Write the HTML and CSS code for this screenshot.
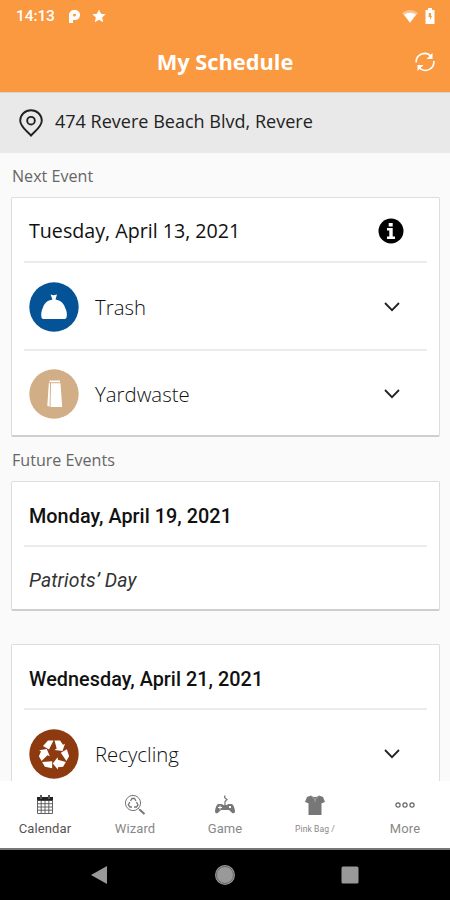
FILE: index.html
```html
<!DOCTYPE html>
<html lang="en">
<head>
<meta charset="utf-8">
<title>My Schedule</title>
<link rel="stylesheet" href="styles.css">
</head>
<body>
<div class="app">
  <header class="top">
    <div class="status">
      <span class="clock">14:13</span>
      <svg class="parking" width="13" height="15" viewBox="0 0 13 15"><path fill="#fff" fill-rule="evenodd" d="M1 6.500C1 3 3.200 1 6.500 1S12 3 12 6s-2.200 5-5.500 5H5v3H1zM6.500 4.500a1.500 1.500 0 1 0 0 3 1.500 1.500 0 1 0 0-3z"/></svg>
      <svg class="star" width="14" height="14" viewBox="0 0 24 24"><path fill="#fff" d="M12 1l3.400 7.300 8 .9-6 5.400 1.700 8L12 18.500l-7.100 4.100 1.700-8-6-5.400 8-.9z"/></svg>
      <svg class="wifi" width="16" height="13" viewBox="0 0 16 13"><path fill="#fff" opacity=".4" d="M0 3Q8-3 16 3L8 13z"/><path fill="#fff" d="M2 4.500Q8 1 14 4.500L8 12.500z"/></svg>
      <svg class="battery" width="10" height="16" viewBox="0 0 10 16"><path fill="#fff" d="M3 0h4v2h2.500v14h-9V2H3z"/><path fill="#fa993f" d="M4 5h2v3h1l-2 4V9H3.500z"/></svg>
    </div>
    <div class="titlebar">
      <h1>My Schedule</h1>
      <svg class="refresh" width="20" height="20" viewBox="0 0 20 20" fill="none" stroke="#fff" stroke-width="1.600"><path d="M1.200 10.500A8.500 8.500 0 0 1 16.200 4.500M18.800 9A8.500 8.500 0 0 1 4 15.500"/><path fill="#fff" stroke="none" d="M17.500 1v6h-6zM2.500 19v-6h6z"/></svg>
    </div>
  </header>
  <div class="address">
    <svg width="24" height="28" viewBox="0 0 24 28" fill="none" stroke="#222" stroke-width="1.900"><path d="M12 26.500C8 22 1.200 18 1.200 11.500a10.800 10.300 0 0 1 21.600 0C22.800 18 16 22 12 26.500z"/><circle cx="12" cy="11.700" r="3.800"/></svg>
    <span>474 Revere Beach Blvd, Revere</span>
  </div>
  <main class="content">
    <h2>Next Event</h2>
    <section class="card next">
      <div class="date">Tuesday, April 13, 2021
        <svg class="info" width="26" height="26" viewBox="0 0 26 26"><circle cx="13" cy="13" r="12.500" fill="#000"/><path fill="#fff" d="M10.700 5h4v3.500h-4zM9 10h5.700v8.500H17V21H9v-2.500h2.300v-6H9z"/></svg>
      </div>
      <div class="event">
        <svg class="badge" width="50" height="50" viewBox="0 0 50 50"><circle cx="25" cy="25" r="24.700" fill="#055397"/><path fill="#fff" d="M21.500 12.500l3 .8 3.500-.8-1.500 5c5 .8 8.500 4 9.500 8 1.500 2.500 2.500 7 1.500 10-.3 1.500-1.500 1.500-3 1.500H15.500c-1.500 0-2.700 0-3-1.500-.8-3 0-7.500 1.500-10 1-4 4.500-7.200 9.500-8z"/></svg>
        <span>Trash</span>
        <svg class="chev" width="16" height="10" viewBox="0 0 16 10"><path d="M1 1l7 7.200L15 1"/></svg>
      </div>
      <div class="event">
        <svg class="badge" width="50" height="50" viewBox="0 0 50 50"><circle cx="25" cy="25" r="24.700" fill="#d2ae87"/><path fill="#fff" d="M20.500 11.500h10.500v1.700H20.500zM22 14.200h9.500l1.700 23.800H21.500zM19.800 14.200h1.300l-.5 23.500-2.300-1z"/></svg>
        <span>Yardwaste</span>
        <svg class="chev" width="16" height="10" viewBox="0 0 16 10"><path d="M1 1l7 7.200L15 1"/></svg>
      </div>
    </section>
    <h2 class="future">Future Events</h2>
    <section class="card holiday">
      <div class="date bold">Monday, April 19, 2021</div>
      <div class="note">Patriots’ Day</div>
    </section>
    <section class="card later">
      <div class="date bold">Wednesday, April 21, 2021</div>
      <div class="event">
        <svg class="badge" width="50" height="50" viewBox="0 0 50 50"><circle cx="25" cy="25" r="24.700" fill="#8e3a11"/>
          <g fill="#fff"><path d="M19 11.500h5.500l-4.500 9-6-3.500zM25.500 11.500H31l3 4.200 2-1-2.500 7.300-8-1 2.200-1.500z"/><path transform="rotate(120 25 25.500)" d="M19 11.500h5.500l-4.500 9-6-3.500zM25.500 11.500H31l3 4.200 2-1-2.500 7.300-8-1 2.200-1.500z"/><path transform="rotate(240 25 25.500)" d="M19 11.500h5.500l-4.500 9-6-3.500zM25.500 11.500H31l3 4.200 2-1-2.500 7.300-8-1 2.200-1.500z"/></g></svg>
        <span>Recycling</span>
        <svg class="chev" width="16" height="10" viewBox="0 0 16 10"><path d="M1 1l7 7.200L15 1"/></svg>
      </div>
    </section>
  </main>
  <nav class="tabs">
    <div class="tab active">
      <svg width="22" height="22" viewBox="0 0 22 22"><path d="M3.500 6.500h15v13h-15zM3 9.700h16M3 13h16M3 16.200h16M7.200 6v14M11 6v14M14.800 6v14" fill="none" stroke="#555" stroke-width=".9"/><path fill="#222" d="M3 3h16v3.500H3z"/><path d="M7 1v4M15 1v4" stroke="#555" stroke-width="2"/></svg>
      <span>Calendar</span>
    </div>
    <div class="tab">
      <svg width="22" height="22" viewBox="0 0 22 22" fill="none" stroke="#777"><circle cx="9" cy="9" r="7.600"/><path d="M6.500 7L8 4.500h2.500L12 7M5.800 8l-1.500 3L6 13h2M12.500 8l1.500 3-1.500 2H10" stroke-width="1.300"/><path d="M14 14l2 2"/><path d="M15.500 15.500l5 4.500" stroke-width="2"/></svg>
      <span>Wizard</span>
    </div>
    <div class="tab">
      <svg width="22" height="22" viewBox="0 0 22 22"><path d="M11 11V7.500l2-2-2.500-2 .5-2" fill="none" stroke="#777" stroke-width="1.200"/><path fill="#777" d="M4 10h4l1 1h4l1-1h4c1.500 1 2.700 4 3 7 0 2.500-2 3-3.300 1.500L15 16H7l-2.700 2.500C3 20 1 19.500 1 17c.3-3 1.500-6 3-7z"/><path fill="#fff" d="M4 13h4v1H4zM5.500 11.500h1v4h-1zM15 12h2v2h-2z"/></svg>
      <span>Game</span>
    </div>
    <div class="tab small">
      <svg width="22" height="22" viewBox="0 0 22 22"><path fill="#777" d="M7 1.500q4 3 8 0l4 1.500 2 5-3.500 1.200V21h-13V9.200L1 8l2-5z"/><path d="M7.500 2l3.500 3.500L14.500 2M11 5v3" fill="none" stroke="#bbb" stroke-width=".7"/></svg>
      <span>Pink Bag /</span>
    </div>
    <div class="tab">
      <svg width="22" height="22" viewBox="0 0 22 22" fill="none" stroke="#666" stroke-width="1.200"><circle cx="4" cy="11" r="2.100"/><circle cx="11" cy="11" r="2.100"/><circle cx="18" cy="11" r="2.100"/></svg>
      <span>More</span>
    </div>
  </nav>
  <div class="system">
    <svg width="18" height="20" viewBox="0 0 18 20"><path fill="#999" d="M17 1v18L1 10z"/></svg>
    <svg width="22" height="22" viewBox="0 0 22 22"><circle cx="11" cy="11" r="10" fill="#999"/><circle cx="11" cy="11" r="8.500" fill="none" stroke="#666"/></svg>
    <svg width="18" height="18" viewBox="0 0 18 18"><rect x=".5" y=".5" width="17" height="17" rx="1.500" fill="#999"/></svg>
  </div>
</div>
</body>
</html>
```
FILE: styles.css
```css
* { box-sizing: border-box; }
body { margin: 0; font-family: "Open Sans", sans-serif; color: #222; }
svg { display: block; flex: none; }
.app { width: 450px; height: 900px; display: flex; flex-direction: column; overflow: hidden; background: #fafafa; }
.top { height: 92px; flex: none; background: #fa993f; color: #fff; }
.status { height: 32px; display: flex; align-items: center; padding: 0 15px 0 16px; }
.clock { font: 500 15.5px Roboto, sans-serif; width: 38px; letter-spacing: -.1px; }
.parking { margin-left: 14px; }
.star { margin-left: 11px; }
.wifi { margin-left: auto; }
.battery { margin-left: 7px; }
.titlebar { height: 60px; display: grid; grid-template-columns: 35px 1fr 35px; align-items: center; }
h1 { grid-column: 2; margin: 0; font-size: 21.8px; line-height: 30px; font-weight: 700; text-align: center; }
.address { height: 61px; flex: none; display: flex; align-items: center; gap: 12px; padding: 0 19px 1px; background: #e9e9e9; border-top: 1px solid #d9d5d0; font-size: 18.05px; }
.address span { padding-bottom: 3px; }
.content { flex: 1; min-height: 0; overflow: hidden; padding: 0 10px 0 11px; }
h2 { margin: 0; height: 44px; padding-left: 1px; font-size: 16.1px; font-weight: 400; line-height: 46px; color: #666; }
.card { background: #fff; border: 1px solid #ddd; border-bottom: 2px solid #cecece; border-radius: 2px; padding: 0 12px; }
.next { height: 240px; }
.holiday { height: 130px; }
.later { margin-top: 33px; height: 240px; }
.date { height: 65px; display: flex; align-items: center; justify-content: space-between; padding: 2px 23px 0 5px; border-bottom: 2px solid #ebebeb; font-size: 19.65px; color: #111; }
.bold { font: 500 19.8px Roboto, sans-serif; padding-top: 5px; letter-spacing: .05px; }
.event { height: 86px; display: flex; align-items: center; gap: 16px; padding: 2px 27px 0 5px; font-size: 20.4px; font-weight: 300; color: #111; }
.event span { padding-bottom: 1px; }
.event + .event { border-top: 2px solid #ebebeb; }
.chev { margin-left: auto; fill: none; stroke: #222; stroke-width: 1.8; }
.note { padding: 2px 5px 0; height: 64px; display: flex; align-items: center; font: italic 400 19.4px Roboto, sans-serif; color: #333; letter-spacing: .15px; }
.tabs { height: 67px; flex: none; display: grid; grid-template-columns: repeat(5, 1fr); background: #fff; }
.tab { display: flex; flex-direction: column; align-items: center; padding: 13px 0 0; font: 13px/16px Roboto, sans-serif; color: #888; letter-spacing: .1px; }
.tab span { margin-top: 5px; }
.active { color: #555; }
.small span { font-size: 8.5px; }
.system { height: 52px; flex: none; display: flex; justify-content: space-between; align-items: center; padding: 0 91px 0 90px; background: #000; border-top: 2px solid #777; }
```
